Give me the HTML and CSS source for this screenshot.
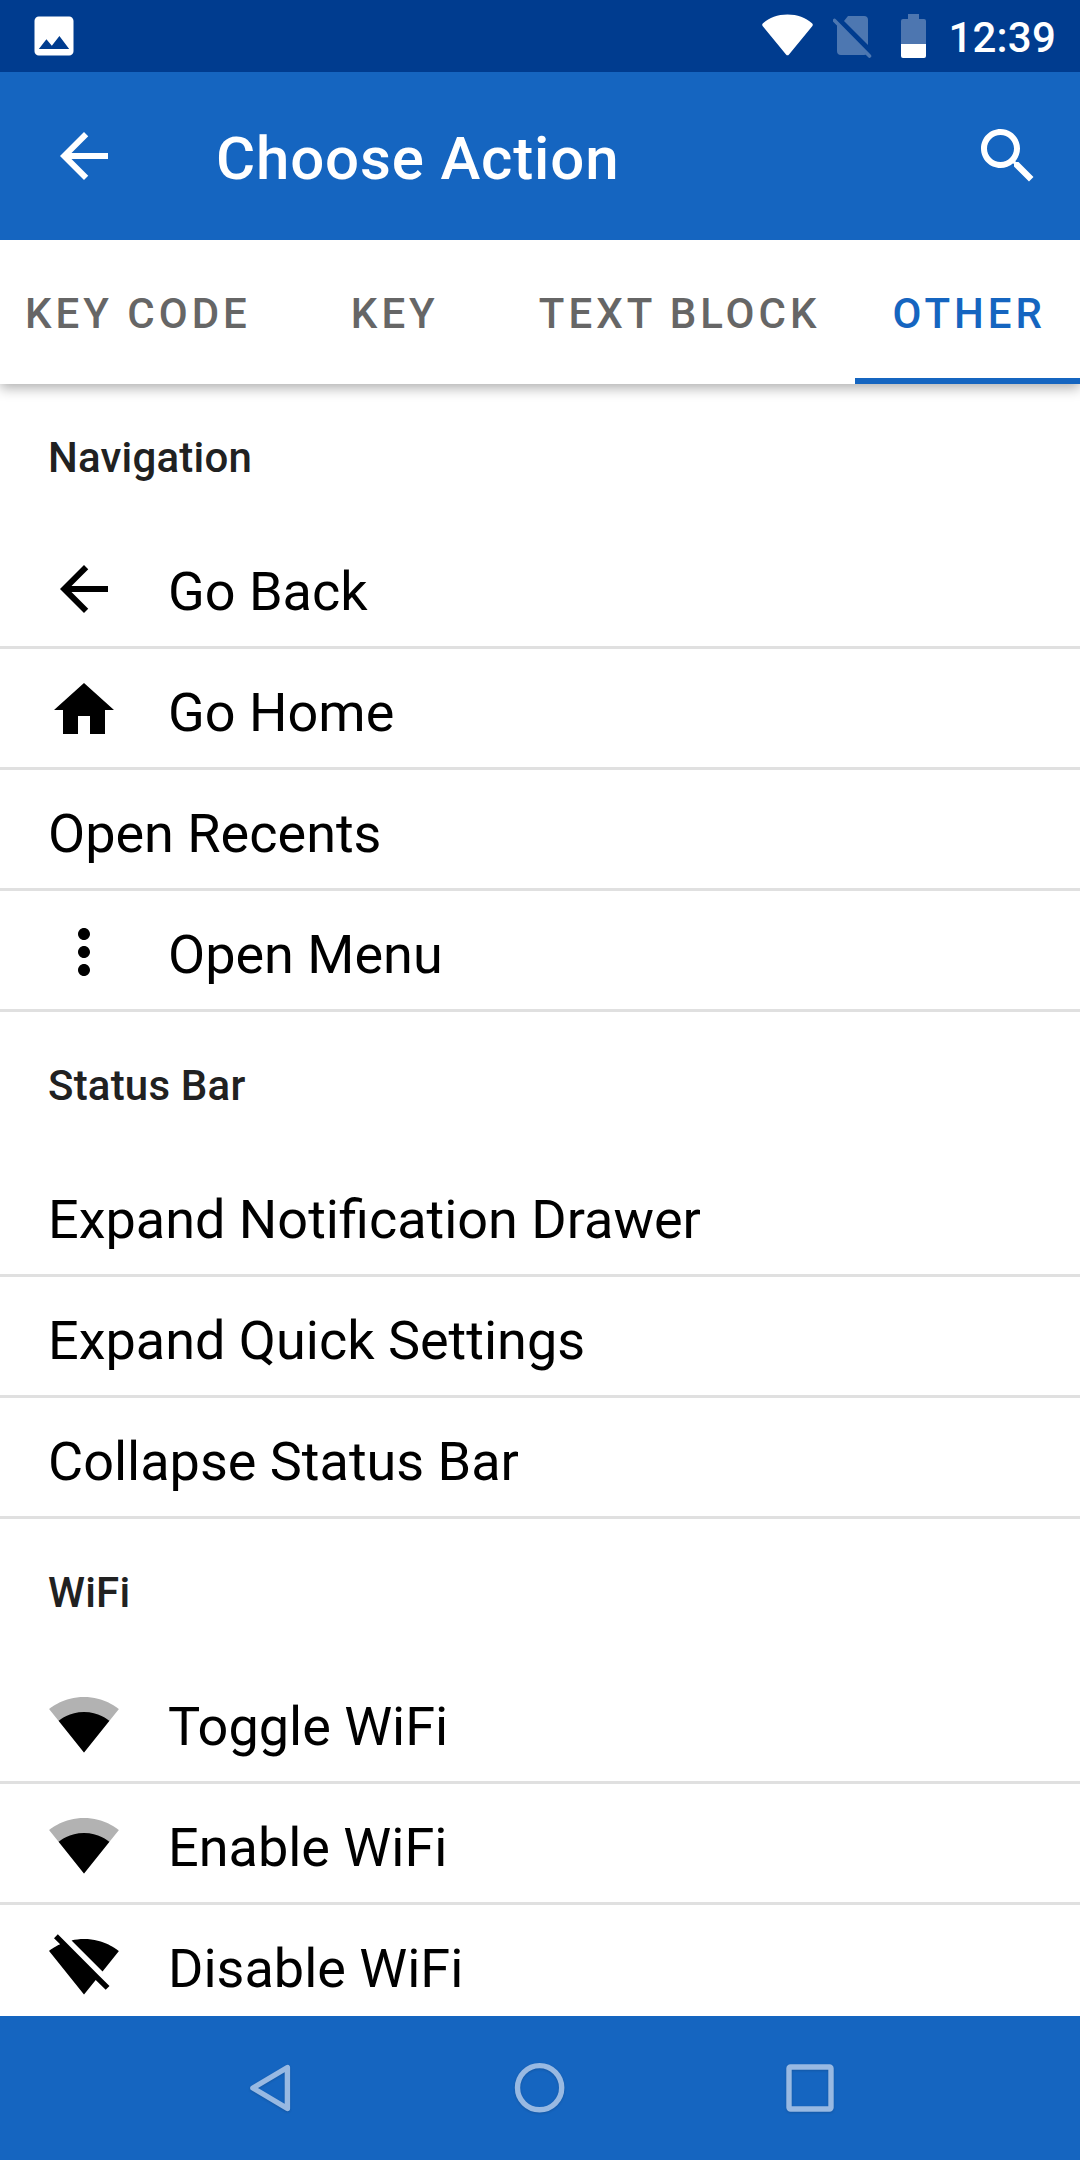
FILE: index.html
```html
<!DOCTYPE html>
<html lang="en">
<head>
    <meta charset="UTF-8">
    <meta name="viewport" content="width=device-width, initial-scale=1.0">
    <title>Choose Action</title>
    <link rel="stylesheet" href="styles.css">
</head>
<body>
    <div class="screen">
        <div class="status-bar">
            <svg class="status-image" viewBox="0 0 24 24"><path d="M21 19V5c0-1.1-.9-2-2-2H5c-1.1 0-2 .9-2 2v14c0 1.1.9 2 2 2h14c1.1 0 2-.9 2-2zM8.5 13.5l2.5 3.01L14.5 12l4.5 6H5l3.5-4.5z"/></svg>
            <div class="status-right">
                <svg class="status-wifi" viewBox="0 0 51 42"><path d="M1 9.200C7.500 3.500 15.500.400 25.500.400S43.500 3.500 50 9.200Q51.500 10.500 50.200 12.200L27 40.500Q25.500 42.200 24 40.500L.800 12.200Q-.500 10.500 1 9.200z"/></svg>
                <svg class="status-sim" viewBox="0 0 39 42"><path d="M15 0H31Q35 0 35 4V29L11 5zM5 9.500L33.500 38Q32.500 39 31 39H8Q4 39 4 35V9z"/><path d="M1.500 4.500L36.500 40" fill="none" stroke="#fff" stroke-width="3.600" stroke-linecap="round"/></svg>
                <svg class="status-battery" viewBox="0 0 25 44"><path class="faded" d="M7 0H18V5H23Q25 5 25 7V30H0V7Q0 5 2 5H7z"/><path d="M0 30H25V42Q25 44 23 44H2Q0 44 0 42z"/></svg>
                <span class="clock">12:39</span>
            </div>
        </div>

        <header class="app-bar">
            <svg class="icon" viewBox="0 0 24 24"><path d="M20 11H7.830l5.590-5.590L12 4l-8 8 8 8 1.410-1.410L7.830 13H20v-2z"/></svg>
            <h1 class="title">Choose Action</h1>
            <svg class="icon" viewBox="0 0 24 24"><path d="M15.500 14h-.790l-.280-.270C15.410 12.590 16 11.110 16 9.500 16 5.910 13.090 3 9.500 3S3 5.910 3 9.500 5.910 16 9.500 16c1.610 0 3.090-.590 4.230-1.570l.270.280v.790l5 4.990L20.490 19l-4.990-5zm-6 0C7.010 14 5 11.990 5 9.500S7.010 5 9.500 5 14 7.010 14 9.500 11.990 14 9.500 14z"/></svg>
        </header>

        <nav class="tabs">
            <div class="tab">KEY CODE</div>
            <div class="tab">KEY</div>
            <div class="tab">TEXT BLOCK</div>
            <div class="tab active">OTHER</div>
        </nav>

        <main class="list">
            <h2 class="section">Navigation</h2>
            <div class="row">
                <svg class="icon" viewBox="0 0 24 24"><path d="M20 11H7.830l5.590-5.590L12 4l-8 8 8 8 1.410-1.410L7.830 13H20v-2z"/></svg>
                <span class="label">Go Back</span>
            </div>
            <div class="row">
                <svg class="icon" viewBox="0 0 24 24"><path d="M10 20v-6h4v6h5v-8h3L12 3 2 12h3v8z"/></svg>
                <span class="label">Go Home</span>
            </div>
            <div class="row">
                <span class="label">Open Recents</span>
            </div>
            <div class="row">
                <svg class="icon" viewBox="0 0 24 24"><path d="M12 8c1.100 0 2-.900 2-2s-.900-2-2-2-2 .900-2 2 .900 2 2 2zm0 2c-1.100 0-2 .900-2 2s.900 2 2 2 2-.900 2-2-.900-2-2-2zm0 6c-1.100 0-2 .900-2 2s.900 2 2 2 2-.900 2-2-.900-2-2-2z"/></svg>
                <span class="label">Open Menu</span>
            </div>

            <h2 class="section">Status Bar</h2>
            <div class="row">
                <span class="label">Expand Notification Drawer</span>
            </div>
            <div class="row">
                <span class="label">Expand Quick Settings</span>
            </div>
            <div class="row">
                <span class="label">Collapse Status Bar</span>
            </div>

            <h2 class="section">WiFi</h2>
            <div class="row">
                <svg class="icon" viewBox="0 0 24 24"><path class="faded" d="M12.010 21.490L23.640 7c-.450-.340-4.930-4-11.640-4C5.280 3 .810 6.660.360 7l11.630 14.490.010.010.010-.010z"/><path d="M3.530 10.950l8.460 10.540.010.010.010-.010 8.460-10.540C20.040 10.620 16.810 8 12 8c-4.810 0-8.040 2.620-8.470 2.950z"/></svg>
                <span class="label">Toggle WiFi</span>
            </div>
            <div class="row">
                <svg class="icon" viewBox="0 0 24 24"><path class="faded" d="M12.010 21.490L23.640 7c-.450-.340-4.930-4-11.640-4C5.280 3 .810 6.660.360 7l11.630 14.490.010.010.010-.010z"/><path d="M3.530 10.950l8.460 10.540.010.010.010-.010 8.460-10.540C20.040 10.620 16.810 8 12 8c-4.810 0-8.040 2.620-8.470 2.950z"/></svg>
                <span class="label">Enable WiFi</span>
            </div>
            <div class="row">
                <svg class="icon" viewBox="0 0 24 24"><path d="M23.640 7c-.450-.340-4.930-4-11.640-4-1.500 0-2.890.190-4.150.480L18.180 13.800 23.640 7zm-6.600 8.220L3.270 1.440 2 2.720l2.050 2.060C1.910 5.760.590 6.820.360 7l11.630 14.490.010.010.010-.010 3.900-4.860 3.320 3.320 1.270-1.270-3.460-3.460z"/></svg>
                <span class="label">Disable WiFi</span>
            </div>
        </main>

        <footer class="nav-bar">
            <svg class="nav-icon" viewBox="0 0 60 60"><path d="M47.400 9.500V50.500L12.900 30z"/></svg>
            <svg class="nav-icon" viewBox="0 0 60 60"><circle cx="29.600" cy="29.700" r="22.100"/></svg>
            <svg class="nav-icon" viewBox="0 0 60 60"><rect x="9" y="9" width="42" height="42" rx="1.500"/></svg>
        </footer>
    </div>
</body>
</html>
```

FILE: styles.css
```css
body {
    margin: 0;
    font-family: Roboto, "Liberation Sans", sans-serif;
    background-color: #fff;
    color: #000;
}

.screen {
    display: flex;
    flex-direction: column;
    width: 1080px;
    height: 2160px;
    overflow: hidden;
}

svg {
    display: block;
    flex-shrink: 0;
    fill: currentColor;
}

.faded {
    opacity: 0.3;
}

.icon {
    width: 72px;
    height: 72px;
}

/* Status bar */
.status-bar {
    display: flex;
    justify-content: space-between;
    flex-shrink: 0;
    box-sizing: border-box;
    height: 72px;
    padding: 0 24px 0 28px;
    background-color: #003c8f;
    color: #fff;
}

.status-image {
    width: 52px;
    height: 52px;
    margin-top: 10px;
}

.status-right {
    display: flex;
    align-items: flex-start;
}

.status-wifi {
    width: 51px;
    height: 42px;
    margin: 14px 20px 0 0;
}

.status-sim {
    width: 39px;
    height: 42px;
    margin: 16px 29px 0 0;
    opacity: 0.3;
}

.status-battery {
    width: 25px;
    height: 44px;
    margin: 14px 22px 0 0;
}

.clock {
    font-size: 42px;
    font-weight: 500;
    line-height: 50px;
    letter-spacing: 0.2px;
    margin-top: 13px;
}

/* App bar */
.app-bar {
    display: flex;
    align-items: center;
    flex-shrink: 0;
    box-sizing: border-box;
    height: 168px;
    padding: 0 36px 0 48px;
    background-color: #1565c0;
    color: #fff;
    z-index: 2;
}

.title {
    flex: 1;
    margin: 0 0 0 96px;
    padding-top: 5px;
    font-size: 60px;
    font-weight: 500;
    line-height: 72px;
    letter-spacing: 0.85px;
}

/* Tabs, scrolled to the last one */
.tabs {
    display: flex;
    justify-content: flex-end;
    flex-shrink: 0;
    height: 144px;
    background-color: #fff;
    box-shadow: 0 4px 12px rgba(0, 0, 0, 0.32);
    z-index: 1;
}

.tab {
    flex-shrink: 0;
    box-sizing: border-box;
    min-width: 216px;
    padding: 0 34px 0 38px;
    border-bottom: 6px solid transparent;
    color: #666;
    font-size: 42px;
    font-weight: 500;
    line-height: 147px;
    letter-spacing: 4px;
    text-align: center;
    white-space: nowrap;
}

.tab.active {
    border-bottom-color: #1565c0;
    color: #1565c0;
}

/* Action list */
.list {
    flex: 1;
    min-height: 0;
    overflow: hidden;
}

.section {
    margin: 0;
    padding: 3px 48px 0;
    color: #212121;
    font-size: 42px;
    font-weight: 500;
    line-height: 141px;
    letter-spacing: 0.2px;
}

.row {
    display: flex;
    align-items: center;
    gap: 48px;
    height: 72px;
    padding: 25px 48px 21px;
    border-bottom: 3px solid #e0e0e0;
}

.label {
    padding-top: 6px;
    font-size: 54px;
    line-height: 64px;
}

/* Navigation bar */
.nav-bar {
    display: flex;
    align-items: center;
    justify-content: center;
    gap: 210px;
    flex-shrink: 0;
    height: 144px;
    background-color: #1565c0;
}

.nav-icon {
    width: 60px;
    height: 60px;
    fill: none;
    stroke: #98b9e2;
    stroke-width: 5.4;
    stroke-linejoin: round;
    filter: drop-shadow(0 1px 1px rgba(0, 0, 0, 0.15));
}
```
